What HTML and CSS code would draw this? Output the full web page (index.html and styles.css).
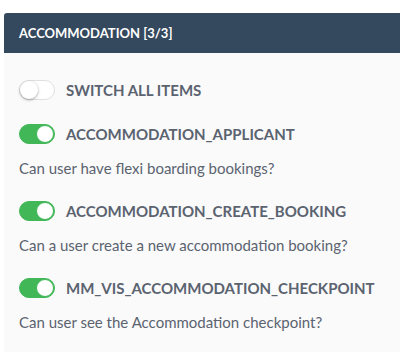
FILE: index.html
```html
<!DOCTYPE html>
<html lang="en">
<head>
  <meta charset="UTF-8">
  <meta name="viewport" content="width=device-width, initial-scale=1.0">
  <title>Accommodation Permissions</title>
  <link rel="stylesheet" href="styles.css">
</head>
<body>
  <div class="panel">
    <div class="panel-header">ACCOMMODATION [3/3]</div>
    <div class="panel-body">
      <div class="switch-row switch-all">
        <span class="toggle"><span class="knob"></span></span>
        <span class="switch-label">SWITCH ALL ITEMS</span>
      </div>

      <div class="item">
        <div class="switch-row">
          <span class="toggle on"><span class="knob"></span></span>
          <span class="switch-label">ACCOMMODATION_APPLICANT</span>
        </div>
        <p class="desc">Can user have flexi boarding bookings?</p>
      </div>

      <div class="item">
        <div class="switch-row">
          <span class="toggle on"><span class="knob"></span></span>
          <span class="switch-label">ACCOMMODATION_CREATE_BOOKING</span>
        </div>
        <p class="desc">Can a user create a new accommodation booking?</p>
      </div>

      <div class="item">
        <div class="switch-row">
          <span class="toggle on"><span class="knob"></span></span>
          <span class="switch-label">MM_VIS_ACCOMMODATION_CHECKPOINT</span>
        </div>
        <p class="desc">Can user see the Accommodation checkpoint?</p>
      </div>
    </div>
  </div>
</body>
</html>
```

FILE: styles.css
```css
body {
  font-family: Lato, "Open Sans", sans-serif;
  background-color: #fff;
  margin: 0;
  overflow: hidden;
}
.panel {
  margin: 13px -20px 0 4px;
}
.panel-header {
  background-color: #34495e;
  color: #fff;
  height: 40px;
  display: flex;
  align-items: center;
  padding-left: 15px;
  font-size: 13px;
  font-weight: bold;
  border-radius: 3px 3px 0 0;
}
.panel-body {
  background-color: #fafafa;
  padding: 27px 15px 20px;
}
.switch-row {
  display: flex;
  align-items: center;
  height: 20px;
}
.switch-all {
  margin-bottom: 24px;
}
.switch-label {
  margin-left: 11px;
  font-size: 15px;
  font-weight: bold;
  color: #5b6370;
}
.toggle {
  position: relative;
  width: 36px;
  height: 20px;
  box-sizing: border-box;
  border-radius: 10px;
  background-color: #fff;
  border: 1px solid #dfdfdf;
}
.toggle .knob {
  position: absolute;
  top: 0;
  left: 0;
  width: 18px;
  height: 18px;
  border-radius: 50%;
  background-color: #fff;
  box-shadow: 0 1px 3px rgba(0, 0, 0, 0.35);
}
.toggle.on {
  background-color: #41b757;
  border-color: #41b757;
}
.toggle.on .knob {
  left: auto;
  right: 0;
  box-shadow: none;
  border: 1px solid #41b757;
  box-sizing: border-box;
}
.item {
  margin-bottom: 23px;
}
.item:last-child {
  margin-bottom: 0;
}
.desc {
  margin: 14px 0 0;
  font-size: 15px;
  line-height: 20px;
  color: #5b6370;
}
```
